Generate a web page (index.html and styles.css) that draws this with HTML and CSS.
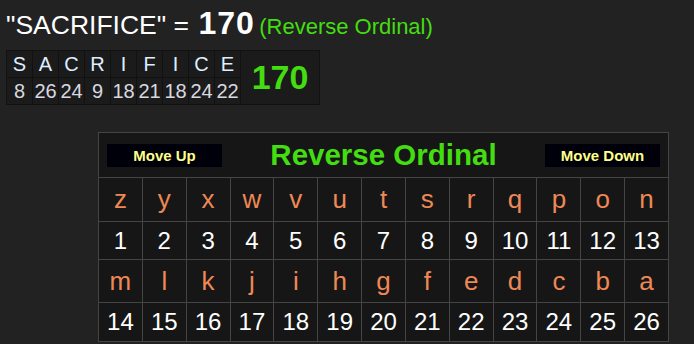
FILE: index.html
```html
<!DOCTYPE html>
<html>
<head>
<meta charset="utf-8">
<link rel="stylesheet" href="styles.css">
</head>
<body>
<div class="headline"><span class="word">"SACRIFICE" = </span><span class="total">170</span> <span class="cipher">(Reverse Ordinal)</span></div>
<div class="breakdown">
  <div class="bl">S</div><div class="bl">A</div><div class="bl">C</div><div class="bl">R</div><div class="bl">I</div><div class="bl">F</div><div class="bl">I</div><div class="bl">C</div><div class="bl">E</div>
  <div class="bsum">170</div>
  <div class="bn">8</div><div class="bn">26</div><div class="bn">24</div><div class="bn">9</div><div class="bn">18</div><div class="bn">21</div><div class="bn">18</div><div class="bn">24</div><div class="bn">22</div>
</div>
<div class="chart">
  <div class="head">
    <div class="btn">Move Up</div>
    <div class="title">Reverse Ordinal</div>
    <div class="btn">Move Down</div>
  </div>
  <div class="l">z</div><div class="l">y</div><div class="l">x</div><div class="l">w</div><div class="l">v</div><div class="l">u</div><div class="l">t</div><div class="l">s</div><div class="l">r</div><div class="l">q</div><div class="l">p</div><div class="l">o</div><div class="l">n</div>
  <div class="n">1</div><div class="n">2</div><div class="n">3</div><div class="n">4</div><div class="n">5</div><div class="n">6</div><div class="n">7</div><div class="n">8</div><div class="n">9</div><div class="n">10</div><div class="n">11</div><div class="n">12</div><div class="n">13</div>
  <div class="l">m</div><div class="l">l</div><div class="l">k</div><div class="l">j</div><div class="l">i</div><div class="l">h</div><div class="l">g</div><div class="l">f</div><div class="l">e</div><div class="l">d</div><div class="l">c</div><div class="l">b</div><div class="l">a</div>
  <div class="n">14</div><div class="n">15</div><div class="n">16</div><div class="n">17</div><div class="n">18</div><div class="n">19</div><div class="n">20</div><div class="n">21</div><div class="n">22</div><div class="n">23</div><div class="n">24</div><div class="n">25</div><div class="n">26</div>
</div>
</body>
</html>
```

FILE: styles.css
```css
html, body {
  margin: 0;
  padding: 0;
  background: #222222;
  font-family: "Liberation Sans", Arial, sans-serif;
}
body {
  padding: 0 0 0 6px;
}
.headline {
  height: 47px;
  line-height: 47px;
  color: #ffffff;
  white-space: nowrap;
}
.word {
  font-size: 26.5px;
}
.total {
  font-size: 32px;
  font-weight: bold;
  letter-spacing: 1px;
  margin-left: 2px;
}
.cipher {
  font-size: 22px;
  color: #44dd11;
}
.breakdown {
  margin-top: 3px;
  display: grid;
  grid-template-columns: repeat(9, 25px) 78px;
  grid-template-rows: 26px 26px;
  gap: 1px;
  width: max-content;
  background: #111111;
  border: 1px solid #111111;
}
.bl, .bn {
  background: #1b1b1b;
  text-align: center;
  font-size: 20px;
  line-height: 26px;
}
.bl {
  color: #dfeeff;
}
.bn {
  color: #d8d8e0;
}
.bsum {
  grid-row: 1 / span 2;
  grid-column: 10;
  background: #1b1b1b;
  color: #44dd11;
  font-weight: bold;
  font-size: 34px;
  display: flex;
  align-items: center;
  justify-content: center;
}
.chart {
  margin: 27px 0 0 92px;
  width: 569px;
  display: grid;
  grid-template-columns: repeat(13, 1fr);
  grid-template-rows: 44px 43px 37px 42px 38px;
  gap: 1px;
  padding: 1px;
  background: #444444;
}
.head {
  grid-column: 1 / -1;
  background: #161616;
  display: flex;
  align-items: center;
  justify-content: space-between;
  padding: 0 8px;
}
.btn {
  width: 115px;
  height: 23px;
  background: #00000a;
  color: #ffff88;
  font-weight: bold;
  font-size: 15px;
  line-height: 23px;
  text-align: center;
}
.title {
  color: #44dd11;
  font-weight: bold;
  font-size: 29.5px;
}
.l, .n {
  background: #161616;
  display: flex;
  align-items: center;
  justify-content: center;
}
.l {
  color: #ee8855;
  font-size: 26px;
}
.n {
  color: #ffffff;
  font-size: 24px;
}
```
